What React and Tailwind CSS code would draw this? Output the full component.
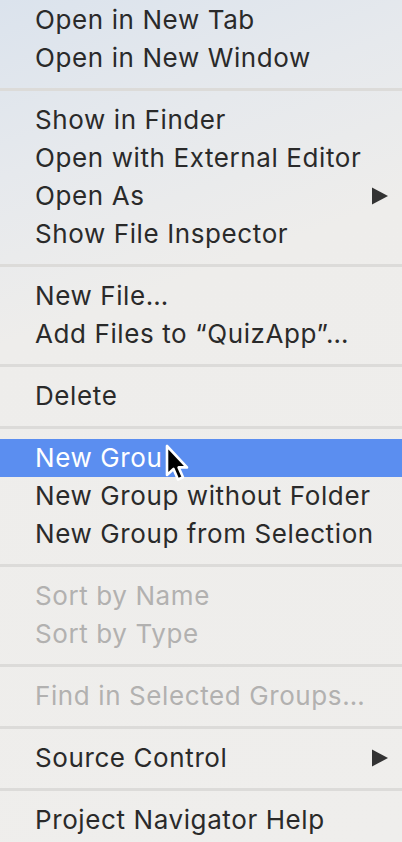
import React from "react";

const groups = [
  [{ t: "Open in New Tab" }, { t: "Open in New Window" }],
  [
    { t: "Show in Finder" },
    { t: "Open with External Editor" },
    { t: "Open As", sub: true },
    { t: "Show File Inspector" },
  ],
  [{ t: "New File…" }, { t: "Add Files to “QuizApp”…" }],
  [{ t: "Delete" }],
  [
    { t: "New Group", hi: true },
    { t: "New Group without Folder" },
    { t: "New Group from Selection" },
  ],
  [{ t: "Sort by Name", dis: true }, { t: "Sort by Type", dis: true }],
  [{ t: "Find in Selected Groups…", dis: true }],
  [{ t: "Source Control", sub: true }],
  [{ t: "Project Navigator Help" }],
];

function Cursor() {
  return (
    <svg
      className="absolute left-[164px] top-[444px]"
      width="26"
      height="40"
      viewBox="0 0 26 40"
    >
      <path
        d="M3 2 L3 31 L9.5 25 L14 35.5 L19 33.3 L14.6 23.4 L23 23.4 Z"
        fill="#000"
        stroke="#fff"
        strokeWidth="2.6"
        strokeLinejoin="round"
      />
    </svg>
  );
}

function Row({ item }) {
  const base =
    "relative flex h-[38px] items-center pl-[35px] pr-[13px] text-[26px] tracking-[0.6px] leading-none";
  const cls = item.hi
    ? "bg-[#5b8ef0] text-white"
    : item.dis
    ? "text-[#b2b1b0]"
    : "text-[#2a2a2a]";
  return (
    <div className={`${base} ${cls}`}>
      <span className="flex-1 whitespace-nowrap">
        {item.hi ? (
          <>
            New Grou<span className="text-[#5b8ef0]">p</span>
          </>
        ) : (
          item.t
        )}
      </span>
      {item.sub && (
        <svg width="18" height="18" viewBox="0 0 18 18">
          <path d="M1 0.5 L17 9 L1 17.5 Z" fill="#333" />
        </svg>
      )}
    </div>
  );
}

export default function App() {
  return (
    <div
      className="relative h-[842px] w-[402px] overflow-hidden bg-[linear-gradient(160deg,#dbe3ed_0%,#e6e9ed_18%,#eeedeb_35%,#efeeec_100%)] pt-[1px]"
      style={{ fontFamily: "Inter, 'Noto Sans', sans-serif" }}
    >
      {groups.map((g, gi) => (
        <React.Fragment key={gi}>
          {gi > 0 && (
            <div className="flex h-[24px] items-center">
              <div className="h-[3px] w-full bg-[#dcdbd9]" />
            </div>
          )}
          {g.map((item, i) => (
            <Row key={i} item={item} />
          ))}
        </React.Fragment>
      ))}
      <Cursor />
    </div>
  );
}
